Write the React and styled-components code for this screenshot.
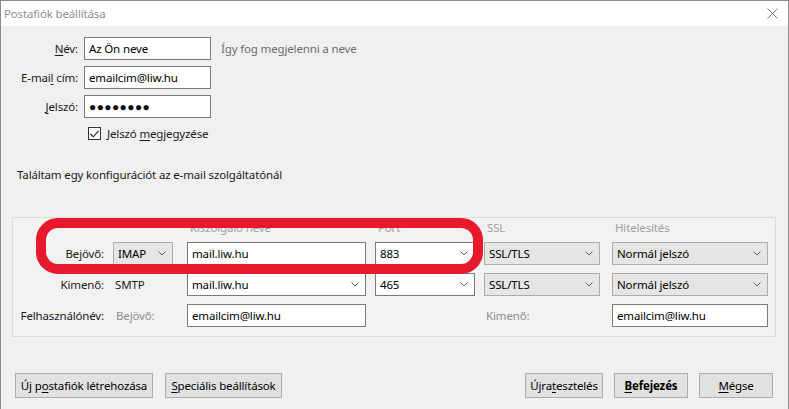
import styled, { createGlobalStyle } from "styled-components";

const GlobalStyle = createGlobalStyle`
  html, body {
    margin: 0;
    padding: 0;
  }
  body {
    width: 789px;
    height: 409px;
    overflow: hidden;
    background: #ffffff;
    font-family: "Noto Sans", "Open Sans", sans-serif;
    font-size: 11.5px;
    letter-spacing: -0.15px;
    color: #1a1a1a;
  }
`;

const Window = styled.div`
  width: 789px;
  height: 409px;
  box-sizing: border-box;
  border: 1px solid #8c8c8c;
  border-bottom: none;
  background: #f0f0f0;
  display: flex;
  flex-direction: column;
`;

const TitleBar = styled.div`
  height: 25px;
  flex: none;
  background: #ffffff;
  display: flex;
  align-items: center;
  justify-content: space-between;
  padding-left: 3px;
  color: #8f8f8f;
`;

const CloseButton = styled.div`
  width: 30px;
  height: 25px;
  margin-right: 1px;
  display: flex;
  align-items: center;
  justify-content: center;
`;

const Body = styled.div`
  flex: 1;
  display: flex;
  flex-direction: column;
  padding: 11px 12px 0 11px;
`;

const Form = styled.div`
  display: flex;
  flex-direction: column;
  gap: 6px;
`;

const FormRow = styled.div`
  display: flex;
  align-items: center;
  height: 23px;
`;

const Label = styled.label`
  flex: none;
  width: 66px;
  margin-right: 6px;
  text-align: right;
  white-space: nowrap;
`;

const Key = styled.span`
  text-decoration: underline;
  text-underline-offset: 2px;
`;

const Hint = styled.span`
  color: #6d6d6d;
  margin-left: 10px;
  white-space: nowrap;
`;

const CheckRow = styled.div`
  display: flex;
  align-items: center;
  gap: 6px;
  height: 17px;
  margin: 7px 0 0 76px;
`;

const CheckBox = styled.span`
  width: 11px;
  height: 11px;
  border: 1px solid #333333;
  background: #ffffff;
  display: flex;
  align-items: center;
  justify-content: center;
`;

const Info = styled.div`
  margin: 24px 0 0 5px;
  height: 17px;
  line-height: 17px;
`;

const Group = styled.div`
  position: relative;
  margin-top: 34px;
  border: 1px solid #dcdcdc;
  background: #f2f2f2;
  display: grid;
  grid-template-columns: 93px 74px 188px 109px 128px 156px;
  grid-template-rows: 12px 23px 23px 23px;
  row-gap: 8px;
  padding: 4px 0 9px 7px;
  align-items: center;
`;

const ColHead = styled.div`
  grid-column: ${(p) => p.$col};
  color: #a0a0a0;
  padding-left: 3px;
  line-height: 12px;
  white-space: nowrap;
`;

const RowLabel = styled.div`
  text-align: right;
  padding-right: 9px;
  white-space: nowrap;
`;

const Plain = styled.div`
  padding-left: ${(p) => p.$pad || 2}px;
  color: ${(p) => (p.$muted ? "#8d8d8d" : "#1a1a1a")};
  white-space: nowrap;
`;

const Field = styled.div`
  flex: none;
  box-sizing: border-box;
  width: ${(p) => p.$w}px;
  height: 23px;
  display: flex;
  align-items: center;
  justify-content: space-between;
  padding: 0 6px 0 4px;
  white-space: nowrap;
  border: 1px solid ${(p) => (p.$kind === "select" ? "#adadad" : "#7a7a7a")};
  background: ${(p) => (p.$kind === "select" ? "#e5e5e5" : "#ffffff")};
  color: #000000;
`;

const Dots = styled.span`
  font-size: 12px;
  letter-spacing: 0.4px;
`;

const Marker = styled.div`
  position: absolute;
  left: 23px;
  top: 0;
  width: 447px;
  height: 56px;
  box-sizing: border-box;
  border: 10px solid #e8192c;
  border-radius: 22px;
  pointer-events: none;
`;

const Footer = styled.div`
  margin-top: 36px;
  display: flex;
  justify-content: space-between;
  padding: 0 3px;
`;

const ButtonGroup = styled.div`
  display: flex;
  gap: ${(p) => p.$gap || 12}px;
`;

const Button = styled.button`
  box-sizing: border-box;
  height: 25px;
  width: ${(p) => p.$w || 74}px;
  padding: 0;
  border: 1px solid #adadad;
  background: #e1e1e1;
  font-family: inherit;
  font-size: 11.5px;
  letter-spacing: -0.15px;
  font-weight: ${(p) => (p.$bold ? 700 : 400)};
  color: #000000;
`;

const Chevron = () => (
  <svg width="8" height="5" viewBox="0 0 8 5">
    <polyline points="0.5,0.5 4,4 7.5,0.5" fill="none" stroke="#606060" strokeWidth="1" />
  </svg>
);

const Select = ({ w, kind = "select", children }) => (
  <Field $w={w} $kind={kind}>
    <span>{children}</span>
    <Chevron />
  </Field>
);

const Input = ({ w, children }) => (
  <Field $w={w} $kind="text">
    <span>{children}</span>
  </Field>
);

export default function App() {
  return (
    <>
      <GlobalStyle />
      <Window>
        <TitleBar>
          <span>Postafiók beállítása</span>
          <CloseButton>
            <svg width="11" height="11" viewBox="0 0 11 11">
              <path d="M0.5 0.5 L10.5 10.5 M10.5 0.5 L0.5 10.5" stroke="#7a7a7a" strokeWidth="1" />
            </svg>
          </CloseButton>
        </TitleBar>

        <Body>
          <Form>
            <FormRow>
              <Label>
                <Key>N</Key>év:
              </Label>
              <Input w={127}>Az Ön neve</Input>
              <Hint>Így fog megjelenni a neve</Hint>
            </FormRow>
            <FormRow>
              <Label>
                E-mai<Key>l</Key> cím:
              </Label>
              <Input w={127}>emailcim@liw.hu</Input>
            </FormRow>
            <FormRow>
              <Label>
                <Key>J</Key>elszó:
              </Label>
              <Input w={127}>
                <Dots>●●●●●●●●</Dots>
              </Input>
            </FormRow>
          </Form>

          <CheckRow>
            <CheckBox>
              <svg width="9" height="8" viewBox="0 0 9 8">
                <polyline points="0.5,4 3.3,6.8 8.5,0.8" fill="none" stroke="#222" strokeWidth="1.1" />
              </svg>
            </CheckBox>
            <span>
              Jelszó <Key>m</Key>egjegyzése
            </span>
          </CheckRow>

          <Info>Találtam egy konfigurációt az e-mail szolgáltatónál</Info>

          <Group>
            <ColHead $col={3}>Kiszolgáló neve</ColHead>
            <ColHead $col={4}>Port</ColHead>
            <ColHead $col={5}>SSL</ColHead>
            <ColHead $col={6}>Hitelesítés</ColHead>

            <RowLabel>Bejövő:</RowLabel>
            <Select w={60}>IMAP</Select>
            <Input w={179}>mail.liw.hu</Input>
            <Select w={100} kind="combo">883</Select>
            <Select w={116}>SSL/TLS</Select>
            <Select w={156}>Normál jelszó</Select>

            <RowLabel>Kimenő:</RowLabel>
            <Plain>SMTP</Plain>
            <Select w={179} kind="combo">mail.liw.hu</Select>
            <Select w={100} kind="combo">465</Select>
            <Select w={116}>SSL/TLS</Select>
            <Select w={156}>Normál jelszó</Select>

            <RowLabel>Felhasználónév:</RowLabel>
            <Plain $muted $pad={3}>Bejövő:</Plain>
            <Input w={179}>emailcim@liw.hu</Input>
            <span />
            <Plain $muted>Kimenő:</Plain>
            <Input w={156}>emailcim@liw.hu</Input>

            <Marker />
          </Group>

          <Footer>
            <ButtonGroup>
              <Button $w={138}>
                Új p<Key>o</Key>stafiók létrehozása
              </Button>
              <Button $w={117}>
                <Key>S</Key>peciális beállítások
              </Button>
            </ButtonGroup>
            <ButtonGroup $gap={11}>
              <Button $w={78}>
                Újra<Key>t</Key>esztelés
              </Button>
              <Button $w={74} $bold>
                <Key>B</Key>efejezés
              </Button>
              <Button $w={74}>
                <Key>M</Key>égse
              </Button>
            </ButtonGroup>
          </Footer>
        </Body>
      </Window>
    </>
  );
}
